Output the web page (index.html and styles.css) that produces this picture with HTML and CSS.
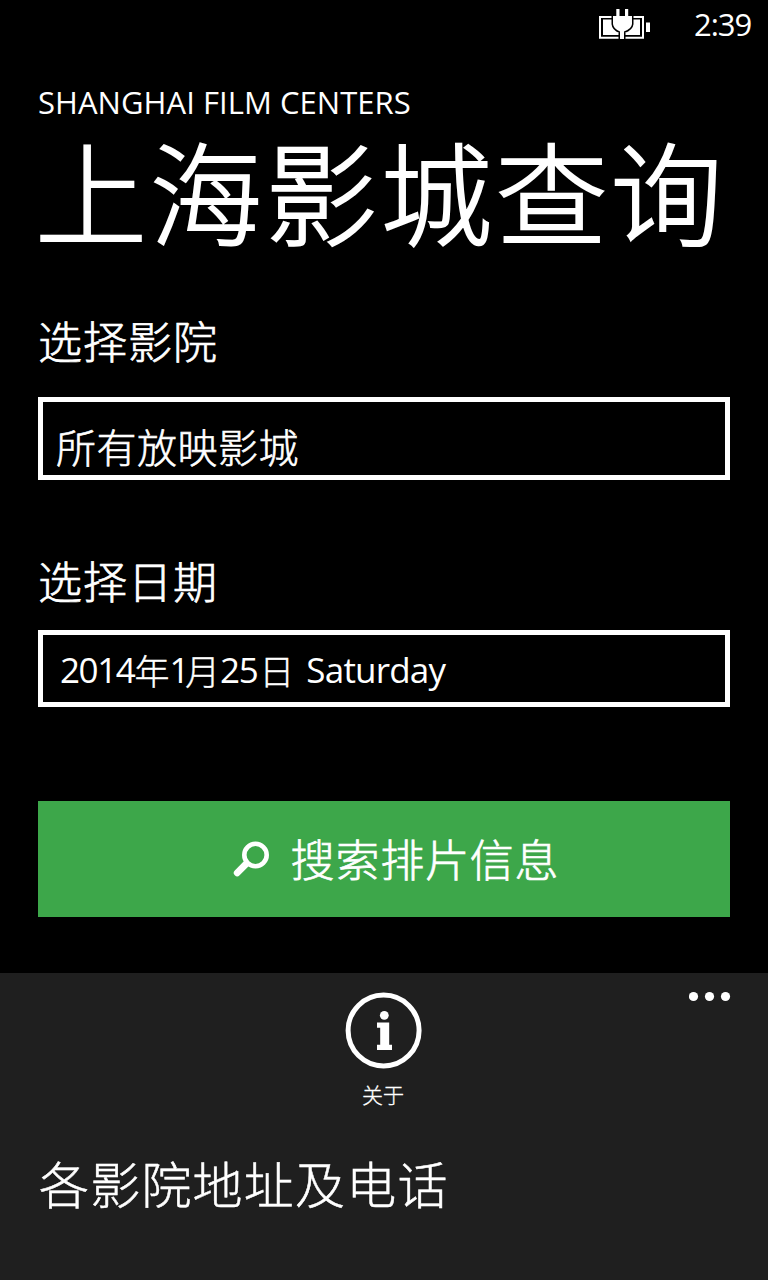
FILE: index.html
```html
<!DOCTYPE html>
<html lang="zh-CN">
<head>
<meta charset="utf-8">
<title>上海影城查询</title>
<link rel="stylesheet" href="styles.css">
</head>
<body>
<div class="screen">
  <header class="status">
    <svg class="battery" width="54" height="34" viewBox="0 0 54 34">
      <path d="M2 9.900H45V30.800H2Z" fill="none" stroke="#fff" stroke-width="2"/>
      <path d="M5 12.500H42V28H5Z" fill="#fff"/>
      <path d="M48 15.500H52V25H48Z" fill="#fff"/>
      <path d="M18.300 2H21.500V9H27V2H30.200V9H34V17Q33.500 22 26 24.500V32H22V24.500Q15.500 22 15 17V9H18.300Z" fill="#fff" stroke="#000" stroke-width="3" paint-order="stroke"/>
    </svg>
    <span class="clock">2:39</span>
  </header>
  <main class="content">
    <div class="app-name"><span>SHANGHAI FILM CENTERS</span></div>
    <h1 class="title">上海影城查询</h1>
    <label class="label">选择影院</label>
    <div class="field cinema">所有放映影城</div>
    <label class="label label-date">选择日期</label>
    <div class="field date"><span class="num">2014</span><span class="han">年</span><span class="num one">1</span><span class="han">月</span><span class="num">25</span><span class="han last">日</span><span class="day">Saturday</span></div>
    <button class="search">
      <svg width="38" height="38" viewBox="0 0 38 38" fill="none" stroke="#fff">
        <circle cx="23.500" cy="15" r="11.200" stroke-width="4.600"/>
        <path d="M14 24L5.200 32.800" stroke-width="6.800" stroke-linecap="round"/>
      </svg>
      <span>搜索排片信息</span>
    </button>
  </main>
  <footer class="appbar">
    <div class="about">
      <svg width="78" height="78" viewBox="0 0 78 78">
        <circle cx="38.600" cy="39.500" r="35.500" fill="none" stroke="#fff" stroke-width="5"/>
        <circle cx="39.300" cy="24.300" r="4.400" fill="#fff"/>
        <path d="M32 31.500H44.200V53.800H47V59H32V53.800H35.200V36.700H32Z" fill="#fff"/>
      </svg>
      <span class="about-text">关于</span>
    </div>
    <svg class="more" width="42" height="11" viewBox="0 0 42 11" fill="#fff">
      <circle cx="4.500" cy="5.500" r="4.600"/><circle cx="20.500" cy="5.500" r="4.600"/><circle cx="36.500" cy="5.500" r="4.600"/>
    </svg>
    <div class="menu-item">各影院地址及电话</div>
  </footer>
</div>
</body>
</html>
```
FILE: styles.css
```css
* { box-sizing: border-box; }
body { margin: 0; background: #000; color: #fff; font-family: "Noto Sans CJK SC", sans-serif; font-weight: 300; }
svg { display: block; flex: none; }
.screen { width: 768px; height: 1280px; display: flex; flex-direction: column; overflow: hidden; }
.status { height: 50px; display: flex; align-items: flex-start; justify-content: flex-end; padding: 7px 16px 0 0; }
.clock { width: 58px; margin: -1px 0 0 42px; font: 400 31px/36px "Open Sans", sans-serif; letter-spacing: -1px; white-space: nowrap; }
.content { flex: none; height: 923px; padding: 34px 38px 0; }
.app-name { height: 36px; font: 400 31px/36px "Open Sans", sans-serif; letter-spacing: 0.050px; white-space: nowrap; }
.title { height: 140px; margin: -1px 0 0 -3px; font-size: 112px; line-height: 140px; font-weight: 300; letter-spacing: 3.100px; white-space: nowrap; -webkit-text-stroke: 1.900px #fff; }
.label { display: block; height: 60px; margin-top: 51px; font-size: 44px; line-height: 60px; letter-spacing: 1px; -webkit-text-stroke: 0.700px #fff; }
.field { border: 5px solid #fff; white-space: nowrap; }
.cinema { height: 83px; margin-top: 27px; padding: 5px 0 0 13px; font-size: 40px; line-height: 79px; letter-spacing: 0.500px; -webkit-text-stroke: 0.600px #fff; }
.label-date { margin-top: 70px; }
.date { height: 77px; margin-top: 20px; padding: 2px 0 0 17px; display: flex; align-items: center; font-size: 35px; line-height: 68px; }
.han { -webkit-text-stroke: 0.400px #fff; }
.last { margin-left: 2px; }
.num, .day { font-family: "Open Sans", sans-serif; font-weight: 400; letter-spacing: -1.400px; }
.one { margin-right: -3px; }
.day { margin-left: 12px; letter-spacing: -0.800px; }
.search { width: 100%; height: 116px; margin-top: 94px; padding: 0 0 3px 23px; border: 0; background: #3da74a; color: #fff; display: flex; align-items: center; justify-content: center; gap: 21px; font-family: inherit; font-weight: 300; font-size: 44px; letter-spacing: 0.800px; -webkit-text-stroke: 0.700px #fff; }
.search svg { margin-top: 3px; }
.appbar { flex: 1; display: grid; grid-template-columns: 1fr 78px 1fr; grid-template-rows: 155px 72px; padding: 18px 37px 0 39px; background: #1f1f1f; }
.about { grid-column: 2; display: flex; flex-direction: column; align-items: center; margin-left: -2px; }
.about-text { margin: 10px 2px 0 0; font-size: 21px; line-height: 30px; -webkit-text-stroke: 0.300px #fff; }
.more { justify-self: end; }
.menu-item { grid-column: 1 / 4; font-size: 50px; line-height: 72px; letter-spacing: 1.200px; -webkit-text-stroke: 0.500px #fff; }
```
